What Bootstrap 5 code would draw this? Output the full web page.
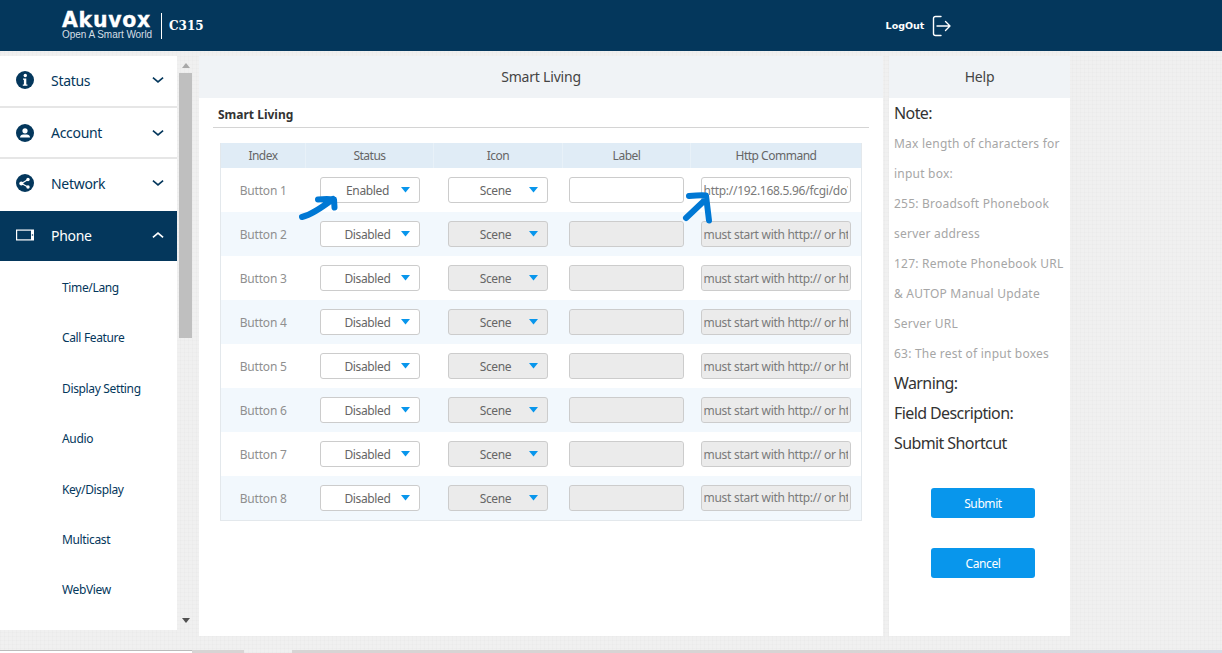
<!DOCTYPE html>
<html lang="en">
<head>
    <meta charset="UTF-8">
    <meta name="viewport" content="width=device-width, initial-scale=1.0">
    <title>Smart Living</title>
    <link href="https://cdn.jsdelivr.net/npm/bootstrap@5.3.0/dist/css/bootstrap.min.css" rel="stylesheet">
    <style>
        html, body { height: 653px; overflow: hidden; }
        body {
            font-family: "Noto Sans", "DejaVu Sans", sans-serif; font-size: 12px; color: #555;
            background-color: #f0f0f0;
            background-image:
                repeating-linear-gradient(0deg, rgba(0,0,0,.012) 0 1px, transparent 1px 4px),
                repeating-linear-gradient(90deg, rgba(0,0,0,.012) 0 1px, transparent 1px 4px);
        }
        .top-bar { height: 51px; background: #04375c; color: #fff; }
        .brand-box { margin-left: 62px; width: 90px; padding-top: 1px; }
        .brand-name { font: 700 20.5px/16px "DejaVu Sans", sans-serif; letter-spacing: .7px; -webkit-text-stroke: .3px #fff; }
        .brand-tag { font: 400 10px/10px "Liberation Sans", sans-serif; color: #d5dfe6; letter-spacing: -.05px; white-space: nowrap; margin-top: 2px; }
        .brand-sep { width: 1px; height: 26px; background: #fff; margin: 0 7px 0 9px; }
        .model-name { font: 700 12px "DejaVu Serif", serif; }
        .logout-box { margin-left: 682px; }
        .logout-text { font: 700 9.5px "DejaVu Sans", sans-serif; margin-right: 8px; }

        .page-body { height: 599px; padding-top: 5px; }
        .side-wrap { width: 177px; height: 574px; overflow: hidden; background: #fff; }
        .side-item.list-group-item {
            display: flex; align-items: center; height: 52px; padding: 0 13px 2px 15px;
            font-size: 14px; letter-spacing: -.3px; color: #04375c; background: #fff; border: 0; border-bottom: 2px solid #e6e6e6; border-radius: 0;
        }
        .side-item .side-icon { width: 20px; height: 20px; margin-right: 16px; flex: none; }
        .side-item .side-chev { width: 12px; height: 8px; margin-left: auto; }
        .side-item.account-item { height: 51px; padding-bottom: 0; }
        .side-item.active-item { background: #04375c; color: #fff; border-bottom: 0; height: 50px; }
        .side-item.no-line { border-bottom: 0; height: 52px; padding-bottom: 4px; }
        .sub-item.list-group-item {
            display: block; height: 50.4px; line-height: 54px; padding: 0 0 0 62px;
            font-size: 12px; letter-spacing: -.35px; color: #04375c; background: #fff; border: 0; border-radius: 0;
        }
        .scroll-track { width: 15px; height: 574px; margin-right: 7px; padding-left: 2px; }
        .scroll-up, .scroll-down { height: 17px; }
        .scroll-up { padding-top: 7px; }
        .scroll-down { padding-top: 5px; }
        .scroll-thumb { height: 265px; background: #bfbfbf; }
        .tri-up { width: 0; border: 4px solid transparent; border-top: 0; border-bottom: 5px solid #a8a8a8; margin-left: 3px; }
        .tri-down { width: 0; border: 4px solid transparent; border-bottom: 0; border-top: 5px solid #505050; margin-left: 3px; }
        .scroll-fill { height: 275px; }

        .main-panel { width: 684px; height: 580px; background: #fff; margin-right: 6px; }
        .panel-head { height: 42px; background: #f0f3f6; text-align: center; line-height: 42px; font-size: 14px; letter-spacing: -.2px; color: #444; }
        .section-title { margin: 0 14px 0 14px; height: 30px; line-height: 33px; padding-left: 5px; font-size: 12px; font-weight: 700; color: #333; border-bottom: 1px solid #d4d4d4; }
        .cmd-table { table-layout: fixed; width: 642px; margin: 15px 0 0 21px; border: 1px solid #e3e8ec; border-top: 0; font-size: 12px; color: #8a8a8a; }
        .cmd-table th, .cmd-table td { padding: 0; border: 0; background: transparent; vertical-align: middle; box-shadow: none; }
        .cmd-table thead th { height: 25px; padding-top: 1px; background: #e0ecf6; color: #666; font-weight: 400; letter-spacing: -.5px; text-align: center; border-left: 1px solid #e8f1f8; }
        .cmd-table thead th:first-child { border-left: 0; }
        .cmd-table tbody tr { height: 44px; }
        .cmd-table tbody tr:nth-child(even) td { background: #f2f8fd; }
        .w-index { width: 85px; } .w-status { width: 128px; } .w-icon { width: 129px; } .w-label { width: 128px; }
        .cmd-table .cell-index { padding-top: 2px; text-align: center; letter-spacing: -.2px; color: #8f8f8f; }
        .cmd-table .cell-status { padding-left: 14px; }
        .cmd-table .cell-icon { padding-left: 14px; }
        .cmd-table .cell-label { padding-left: 6px; }
        .cmd-table .cell-cmd { padding-left: 10px; }
        .cmd-table .form-select {
            width: 100px; height: 26px; padding: 2px 18px 0 14px; font-size: 12px; letter-spacing: -.35px; color: #666; text-align: center;
            border: 1px solid #ccc; border-radius: 3px; background-color: #fff;
            background-image: url("data:image/svg+xml,%3Csvg xmlns='http://www.w3.org/2000/svg' width='9' height='6'%3E%3Cpath d='M0 0h9L4.500 5.500z' fill='%230896ec'/%3E%3C/svg%3E");
            background-position: right 9px center; background-size: 9px 6px;
        }
        .cmd-table .form-select:disabled, .cmd-table .form-control:disabled { background-color: #ebebeb; opacity: 1; }
        .cmd-table .form-control { height: 26px; padding: 0 2px; font-size: 12px; letter-spacing: -.28px; color: #7a7a7a; border: 1px solid #ccc; border-radius: 3px; }
        .label-input { width: 115px; } .cmd-input { width: 150px; }
        .hand-arrows { position: absolute; left: 0; top: 0; pointer-events: none; }

        .help-panel { width: 181px; height: 580px; background: #fff; }
        .help-body { padding-left: 5px; }
        .help-line { height: 30px; line-height: 32px; white-space: nowrap; color: #a6a6a6; font-size: 12px; letter-spacing: .22px; }
        .help-line.help-head { line-height: 30px; color: #333; font-size: 16px; letter-spacing: -.6px; }
        .help-btn { display: block; width: 104px; height: 30px; margin: 30px 0 0 42px; padding: 1px 0 0; font-size: 12px; letter-spacing: -.4px; color: #fff; background: #0896ec; border: 0; border-radius: 3px; }

        .bottom-strip { height: 3px; }
        .strip-a { width: 192px; background: #fff; border-top: 1px solid #bbb; }
        .strip-b { width: 52px; background: #d8d4d4; }
        .strip-c { width: 48px; }
        .strip-d { flex: 1; background: linear-gradient(90deg, #d8d4d4 60%, #d6dbe6); }
    </style>
</head>
<body>
    <header class="top-bar d-flex align-items-center">
        <div class="brand-box">
            <div class="brand-name">Akuvox</div>
            <div class="brand-tag">Open A Smart World</div>
        </div>
        <div class="brand-sep"></div>
        <div class="model-name">C315</div>
        <div class="logout-box d-flex align-items-center">
            <span class="logout-text">LogOut</span>
            <svg width="19" height="22" viewBox="0 0 19 22" fill="none" stroke="#fff" stroke-width="1.400" stroke-linecap="round" stroke-linejoin="round">
                <path d="M9 1.500H3.500a2 2 0 0 0-2 2v15a2 2 0 0 0 2 2H9"/>
                <path d="M5 11h13M13.500 6.500l4.500 4.500-4.500 4.500"/>
            </svg>
        </div>
    </header>

    <div class="page-body d-flex">
        <nav class="side-wrap list-group list-group-flush rounded-0">
            <a class="side-item list-group-item">
                <svg class="side-icon" viewBox="0 0 20 20"><circle cx="10" cy="10" r="9" fill="#04375c"/><circle cx="10.300" cy="5.500" r="1.700" fill="#fff"/><path d="M8 8.500h3.300v6h1.100v1.200H7.800v-1.200h1.100V9.700H8z" fill="#fff"/></svg>
                Status
                <svg class="side-chev" viewBox="0 0 13 8" fill="none" stroke="#04375c" stroke-width="1.800"><path d="M1 1.500l5.500 4.500 5.500-4.500"/></svg>
            </a>
            <a class="side-item account-item list-group-item">
                <svg class="side-icon" viewBox="0 0 20 20"><circle cx="10" cy="10" r="9" fill="#04375c"/><circle cx="10" cy="7.800" r="2.600" fill="#fff"/><path d="M5 14.500c0-2.500 2-3 5-3s5 .5 5 3z" fill="#fff"/></svg>
                Account
                <svg class="side-chev" viewBox="0 0 13 8" fill="none" stroke="#04375c" stroke-width="1.800"><path d="M1 1.500l5.500 4.500 5.500-4.500"/></svg>
            </a>
            <a class="side-item no-line list-group-item">
                <svg class="side-icon" viewBox="0 0 20 20"><circle cx="10" cy="10" r="9" fill="#04375c"/><path d="M6.500 10.500l6.500-4M6.500 10.500l6.500 3.500" stroke="#fff" stroke-width="1.200"/><circle cx="6.300" cy="10.500" r="2" fill="#fff"/><circle cx="13" cy="6.500" r="1.700" fill="#fff"/><circle cx="13" cy="14" r="1.700" fill="#fff"/></svg>
                Network
                <svg class="side-chev" viewBox="0 0 13 8" fill="none" stroke="#04375c" stroke-width="1.800"><path d="M1 1.500l5.500 4.500 5.500-4.500"/></svg>
            </a>
            <a class="side-item active-item list-group-item">
                <svg class="side-icon" viewBox="0 0 20 20"><rect x="1" y="4.500" width="18" height="11" fill="#fff"/><rect x="2.200" y="5.700" width="13.800" height="8.600" fill="#04375c"/><circle cx="17.500" cy="10" r=".8" fill="#04375c"/></svg>
                Phone
                <svg class="side-chev" viewBox="0 0 13 8" fill="none" stroke="#fff" stroke-width="1.800"><path d="M1 6.500l5.500-4.500 5.500 4.500"/></svg>
            </a>
            <a class="sub-item list-group-item">Time/Lang</a>
            <a class="sub-item list-group-item">Call Feature</a>
            <a class="sub-item list-group-item">Display Setting</a>
            <a class="sub-item list-group-item">Audio</a>
            <a class="sub-item list-group-item">Key/Display</a>
            <a class="sub-item list-group-item">Multicast</a>
            <a class="sub-item list-group-item">WebView</a>
        </nav>

        <div class="scroll-track">
            <div class="scroll-up"><div class="tri-up"></div></div>
            <div class="scroll-thumb"></div>
            <div class="scroll-fill"></div>
            <div class="scroll-down"><div class="tri-down"></div></div>
        </div>

        <main class="main-panel position-relative">
            <div class="panel-head">Smart Living</div>
            <div class="section-title">Smart Living</div>
            <table class="cmd-table table mb-0">
                <thead>
                    <tr>
                        <th class="w-index">Index</th>
                        <th class="w-status">Status</th>
                        <th class="w-icon">Icon</th>
                        <th class="w-label">Label</th>
                        <th>Http Command</th>
                    </tr>
                </thead>
                <tbody>
                    <tr>
                        <td class="cell-index">Button 1</td>
                        <td class="cell-status"><select class="form-select"><option>Enabled</option></select></td>
                        <td class="cell-icon"><select class="form-select"><option>Scene</option></select></td>
                        <td class="cell-label"><input class="form-control label-input" type="text"></td>
                        <td class="cell-cmd"><input class="form-control cmd-input" type="text" value="http://192.168.5.96/fcgi/do?action=OpenDoor"></td>
                    </tr>
                    <tr>
                        <td class="cell-index">Button 2</td>
                        <td class="cell-status"><select class="form-select"><option>Disabled</option></select></td>
                        <td class="cell-icon"><select class="form-select" disabled><option>Scene</option></select></td>
                        <td class="cell-label"><input class="form-control label-input" type="text" disabled></td>
                        <td class="cell-cmd"><input class="form-control cmd-input" type="text" disabled value="must start with http:// or https://"></td>
                    </tr>
                    <tr>
                        <td class="cell-index">Button 3</td>
                        <td class="cell-status"><select class="form-select"><option>Disabled</option></select></td>
                        <td class="cell-icon"><select class="form-select" disabled><option>Scene</option></select></td>
                        <td class="cell-label"><input class="form-control label-input" type="text" disabled></td>
                        <td class="cell-cmd"><input class="form-control cmd-input" type="text" disabled value="must start with http:// or https://"></td>
                    </tr>
                    <tr>
                        <td class="cell-index">Button 4</td>
                        <td class="cell-status"><select class="form-select"><option>Disabled</option></select></td>
                        <td class="cell-icon"><select class="form-select" disabled><option>Scene</option></select></td>
                        <td class="cell-label"><input class="form-control label-input" type="text" disabled></td>
                        <td class="cell-cmd"><input class="form-control cmd-input" type="text" disabled value="must start with http:// or https://"></td>
                    </tr>
                    <tr>
                        <td class="cell-index">Button 5</td>
                        <td class="cell-status"><select class="form-select"><option>Disabled</option></select></td>
                        <td class="cell-icon"><select class="form-select" disabled><option>Scene</option></select></td>
                        <td class="cell-label"><input class="form-control label-input" type="text" disabled></td>
                        <td class="cell-cmd"><input class="form-control cmd-input" type="text" disabled value="must start with http:// or https://"></td>
                    </tr>
                    <tr>
                        <td class="cell-index">Button 6</td>
                        <td class="cell-status"><select class="form-select"><option>Disabled</option></select></td>
                        <td class="cell-icon"><select class="form-select" disabled><option>Scene</option></select></td>
                        <td class="cell-label"><input class="form-control label-input" type="text" disabled></td>
                        <td class="cell-cmd"><input class="form-control cmd-input" type="text" disabled value="must start with http:// or https://"></td>
                    </tr>
                    <tr>
                        <td class="cell-index">Button 7</td>
                        <td class="cell-status"><select class="form-select"><option>Disabled</option></select></td>
                        <td class="cell-icon"><select class="form-select" disabled><option>Scene</option></select></td>
                        <td class="cell-label"><input class="form-control label-input" type="text" disabled></td>
                        <td class="cell-cmd"><input class="form-control cmd-input" type="text" disabled value="must start with http:// or https://"></td>
                    </tr>
                    <tr>
                        <td class="cell-index">Button 8</td>
                        <td class="cell-status"><select class="form-select"><option>Disabled</option></select></td>
                        <td class="cell-icon"><select class="form-select" disabled><option>Scene</option></select></td>
                        <td class="cell-label"><input class="form-control label-input" type="text" disabled></td>
                        <td class="cell-cmd"><input class="form-control cmd-input" type="text" disabled value="must start with http:// or https://"></td>
                    </tr>
                </tbody>
            </table>
            <!-- hand drawn arrows on top of the table -->
            <svg class="hand-arrows" width="684" height="580" viewBox="199 56 684 580" fill="none" stroke="#0078d4" stroke-width="6" stroke-linecap="round" stroke-linejoin="round">
                <path d="M302 217c8-2 18-8 31-18M318 199.500c6-.5 12-.5 16 0l.5 8"/>
                <path d="M686 218l19-18M689 196c6-.5 12-1 17-.5l3 25"/>
            </svg>
        </main>

        <aside class="help-panel">
            <div class="panel-head">Help</div>
            <div class="help-body">
                <div class="help-line help-head">Note:</div>
                <div class="help-line">Max length of characters for</div>
                <div class="help-line">input box:</div>
                <div class="help-line">255: Broadsoft Phonebook</div>
                <div class="help-line">server address</div>
                <div class="help-line">127: Remote Phonebook URL</div>
                <div class="help-line">&amp; AUTOP Manual Update</div>
                <div class="help-line">Server URL</div>
                <div class="help-line">63: The rest of input boxes</div>
                <div class="help-line help-head">Warning:</div>
                <div class="help-line help-head">Field Description:</div>
                <div class="help-line help-head">Submit Shortcut</div>
            </div>
            <button class="help-btn btn" type="button">Submit</button>
            <button class="help-btn btn" type="button">Cancel</button>
        </aside>
    </div>

    <div class="bottom-strip d-flex">
        <div class="strip-a"></div>
        <div class="strip-b"></div>
        <div class="strip-c"></div>
        <div class="strip-d"></div>
    </div>

    <script src="https://cdn.jsdelivr.net/npm/bootstrap@5.3.0/dist/js/bootstrap.bundle.min.js"></script>
</body>
</html>
